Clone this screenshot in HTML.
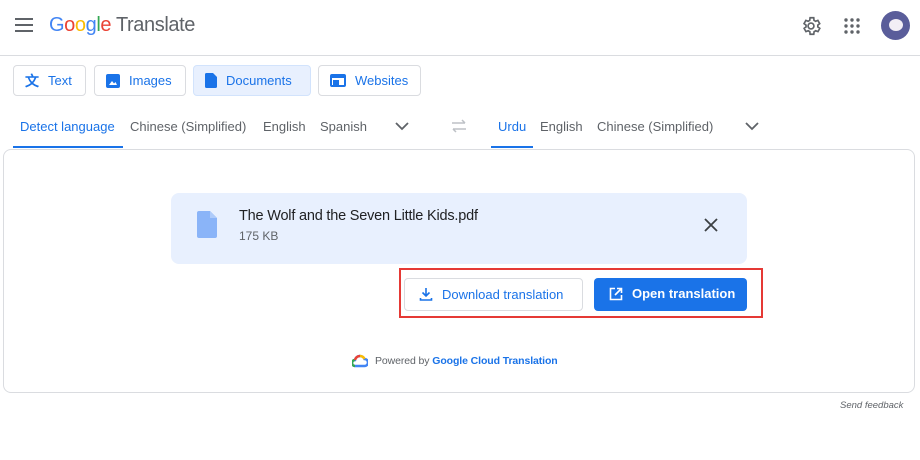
<!DOCTYPE html>
<html><head><style>
*{box-sizing:border-box;margin:0;padding:0}
body{width:920px;height:460px;background:#fff;font-family:"Liberation Sans",Arial,sans-serif;position:relative;overflow:hidden;color:#3c4043}
.a{position:absolute}
.btn{position:absolute;top:65px;height:31px;border:1px solid #dadce0;border-radius:4px;font-size:13px;color:#1a73e8;display:flex;align-items:center;gap:9px;padding-left:11px}
.tab{position:absolute;top:119px;font-size:13px;color:#5f6368}
</style></head><body>
<svg class="a" style="left:14px;top:16px" width="20" height="18" viewBox="0 0 20 18"><path d="M1 3h18M1 9h18M1 15h18" stroke="#5f6368" stroke-width="2"/></svg>
<div class="a" style="left:49px;top:14px;font-size:20px;letter-spacing:-0.4px"><span style="color:#4285f4">G</span><span style="color:#ea4335">o</span><span style="color:#fbbc05">o</span><span style="color:#4285f4">g</span><span style="color:#34a853">l</span><span style="color:#ea4335">e</span><span style="color:#5f6368"> Translate</span></div>
<svg class="a" style="left:800px;top:15px" width="22" height="22" viewBox="0 0 24 24"><circle cx="12" cy="12" r="3.2" fill="none" stroke="#5f6368" stroke-width="1.8"/><path d="M19.4 13a7.5 7.5 0 0 0 0-2l2.1-1.6-2-3.5-2.5 1a7 7 0 0 0-1.7-1L15 3h-4l-.4 2.9a7 7 0 0 0-1.7 1l-2.5-1-2 3.5L6.6 11a7.5 7.5 0 0 0 0 2l-2.1 1.6 2 3.5 2.5-1a7 7 0 0 0 1.7 1L11 21h4l.4-2.9a7 7 0 0 0 1.7-1l2.5 1 2-3.5z" fill="none" stroke="#5f6368" stroke-width="1.8"/></svg>
<svg class="a" style="left:844px;top:18px" width="16" height="16"><g fill="#5f6368"><circle cx="2" cy="2" r="1.7"/><circle cx="8" cy="2" r="1.7"/><circle cx="14" cy="2" r="1.7"/><circle cx="2" cy="8" r="1.7"/><circle cx="8" cy="8" r="1.7"/><circle cx="14" cy="8" r="1.7"/><circle cx="2" cy="14" r="1.7"/><circle cx="8" cy="14" r="1.7"/><circle cx="14" cy="14" r="1.7"/></g></svg>
<div class="a" style="left:881px;top:11px;width:29px;height:29px;border-radius:50%;background:#5a5d9a"><div class="a" style="left:8px;top:8px;width:14px;height:12px;border-radius:50%;background:#f2eef5"></div></div>
<div class="a" style="left:0;top:55px;width:920px;height:1px;background:#dadce0"></div>
<div class="btn" style="left:13px;width:73px"><span style="font-size:14px;font-weight:bold">文</span>Text</div>
<div class="btn" style="left:94px;width:92px"><svg width="14" height="14"><rect width="14" height="14" rx="2" fill="#1a73e8"/><path d="M3 11l3-4 2 2.5 1.5-1.5L11 11z" fill="#fff"/></svg>Images</div>
<div class="btn" style="left:193px;width:118px;background:#e8f0fe;border-color:#d2e3fc"><svg width="12" height="15"><path d="M0 1.5Q0 0 1.5 0H8l4 4v9.5Q12 15 10.5 15h-9Q0 15 0 13.5z" fill="#1a73e8"/></svg>Documents</div>
<div class="btn" style="left:318px;width:103px"><svg width="16" height="13"><rect x="1" y="1" width="14" height="11" rx="1" fill="none" stroke="#1a73e8" stroke-width="2"/><rect x="1" y="1" width="14" height="3" fill="#1a73e8"/><rect x="3" y="6" width="6" height="5" fill="#1a73e8"/></svg>Websites</div>
<div class="tab" style="left:20px;color:#1a73e8">Detect language</div>
<div class="a" style="left:13px;top:146px;width:110px;height:2px;background:#1a73e8"></div>
<div class="tab" style="left:130px">Chinese (Simplified)</div>
<div class="tab" style="left:263px">English</div>
<div class="tab" style="left:320px">Spanish</div>
<svg class="a" style="left:395px;top:122px" width="14" height="9"><path d="M1 1l6 6 6-6" fill="none" stroke="#5f6368" stroke-width="1.8"/></svg>
<svg class="a" style="left:450px;top:119px" width="18" height="14"><path d="M2 4h13M12 1l3 3M16 10H3M6 13l-3-3" fill="none" stroke="#bdc1c6" stroke-width="1.5"/></svg>
<div class="tab" style="left:498px;color:#1a73e8">Urdu</div>
<div class="a" style="left:491px;top:146px;width:42px;height:2px;background:#1a73e8"></div>
<div class="tab" style="left:540px">English</div>
<div class="tab" style="left:597px">Chinese (Simplified)</div>
<svg class="a" style="left:745px;top:122px" width="14" height="9"><path d="M1 1l6 6 6-6" fill="none" stroke="#5f6368" stroke-width="1.8"/></svg>
<div class="a" style="left:3px;top:149px;width:912px;height:244px;border:1px solid #dadce0;border-radius:8px"></div>
<div class="a" style="left:171px;top:193px;width:576px;height:71px;background:#e8f0fe;border-radius:8px"></div>
<svg class="a" style="left:197px;top:211px" width="20" height="27"><path d="M0 2Q0 0 2 0H13l7 7v18q0 2-2 2H2q-2 0-2-2z" fill="#8ab4f8"/><path d="M13 0v7h7" fill="#aecbfa"/></svg>
<div class="a" style="left:239px;top:208px;font-size:14.5px;color:#202124;letter-spacing:-0.2px">The Wolf and the Seven Little Kids.pdf</div>
<div class="a" style="left:239px;top:229px;font-size:12px;color:#5f6368">175 KB</div>
<svg class="a" style="left:704px;top:218px" width="14" height="14"><path d="M1 1l12 12M13 1L1 13" stroke="#3c4043" stroke-width="1.8"/></svg>
<div class="a" style="left:399px;top:268px;width:364px;height:50px;border:2px solid #e53935"></div>
<div class="a" style="left:404px;top:278px;width:179px;height:33px;border:1px solid #dadce0;border-radius:4px;font-size:13px;color:#1a73e8;padding:8px 0 0 37px">Download translation</div>
<svg class="a" style="left:419px;top:287px" width="14" height="14"><path d="M7 1v8M3.5 5.5L7 9l3.5-3.5M1.5 11v2h11v-2" fill="none" stroke="#1a73e8" stroke-width="1.6"/></svg>
<div class="a" style="left:594px;top:278px;width:153px;height:33px;background:#1a73e8;border-radius:4px;font-size:13px;color:#fff;font-weight:bold;padding:8px 0 0 38px">Open translation</div>
<svg class="a" style="left:609px;top:287px" width="14" height="14"><path d="M6 1.5H1.5v11h11V8M8 1.5h4.5V6M12.5 1.5L6 8" fill="none" stroke="#fff" stroke-width="1.6"/></svg>
<svg class="a" style="left:352px;top:354px" width="16" height="14"><path d="M3 12a3 3 0 0 1 0-6 5 5 0 0 1 9.5-1A3.5 3.5 0 0 1 12.5 12z" fill="none" stroke="#4285f4" stroke-width="2.5"/><path d="M3 12a3 3 0 0 1 0-6" fill="none" stroke="#34a853" stroke-width="2.5"/><path d="M3 6a5 5 0 0 1 5-4" fill="none" stroke="#ea4335" stroke-width="2.5"/><path d="M8 2a5 5 0 0 1 4.5 3" fill="none" stroke="#fbbc05" stroke-width="2.5"/></svg>
<div class="a" style="left:375px;top:355px;font-size:10.5px;color:#5f6368;letter-spacing:-0.1px">Powered by <span style="color:#1a73e8;font-weight:bold">Google Cloud Translation</span></div>
<div class="a" style="left:840px;top:400px;font-size:9.5px;font-style:italic;color:#5f6368">Send feedback</div>
</body></html>
